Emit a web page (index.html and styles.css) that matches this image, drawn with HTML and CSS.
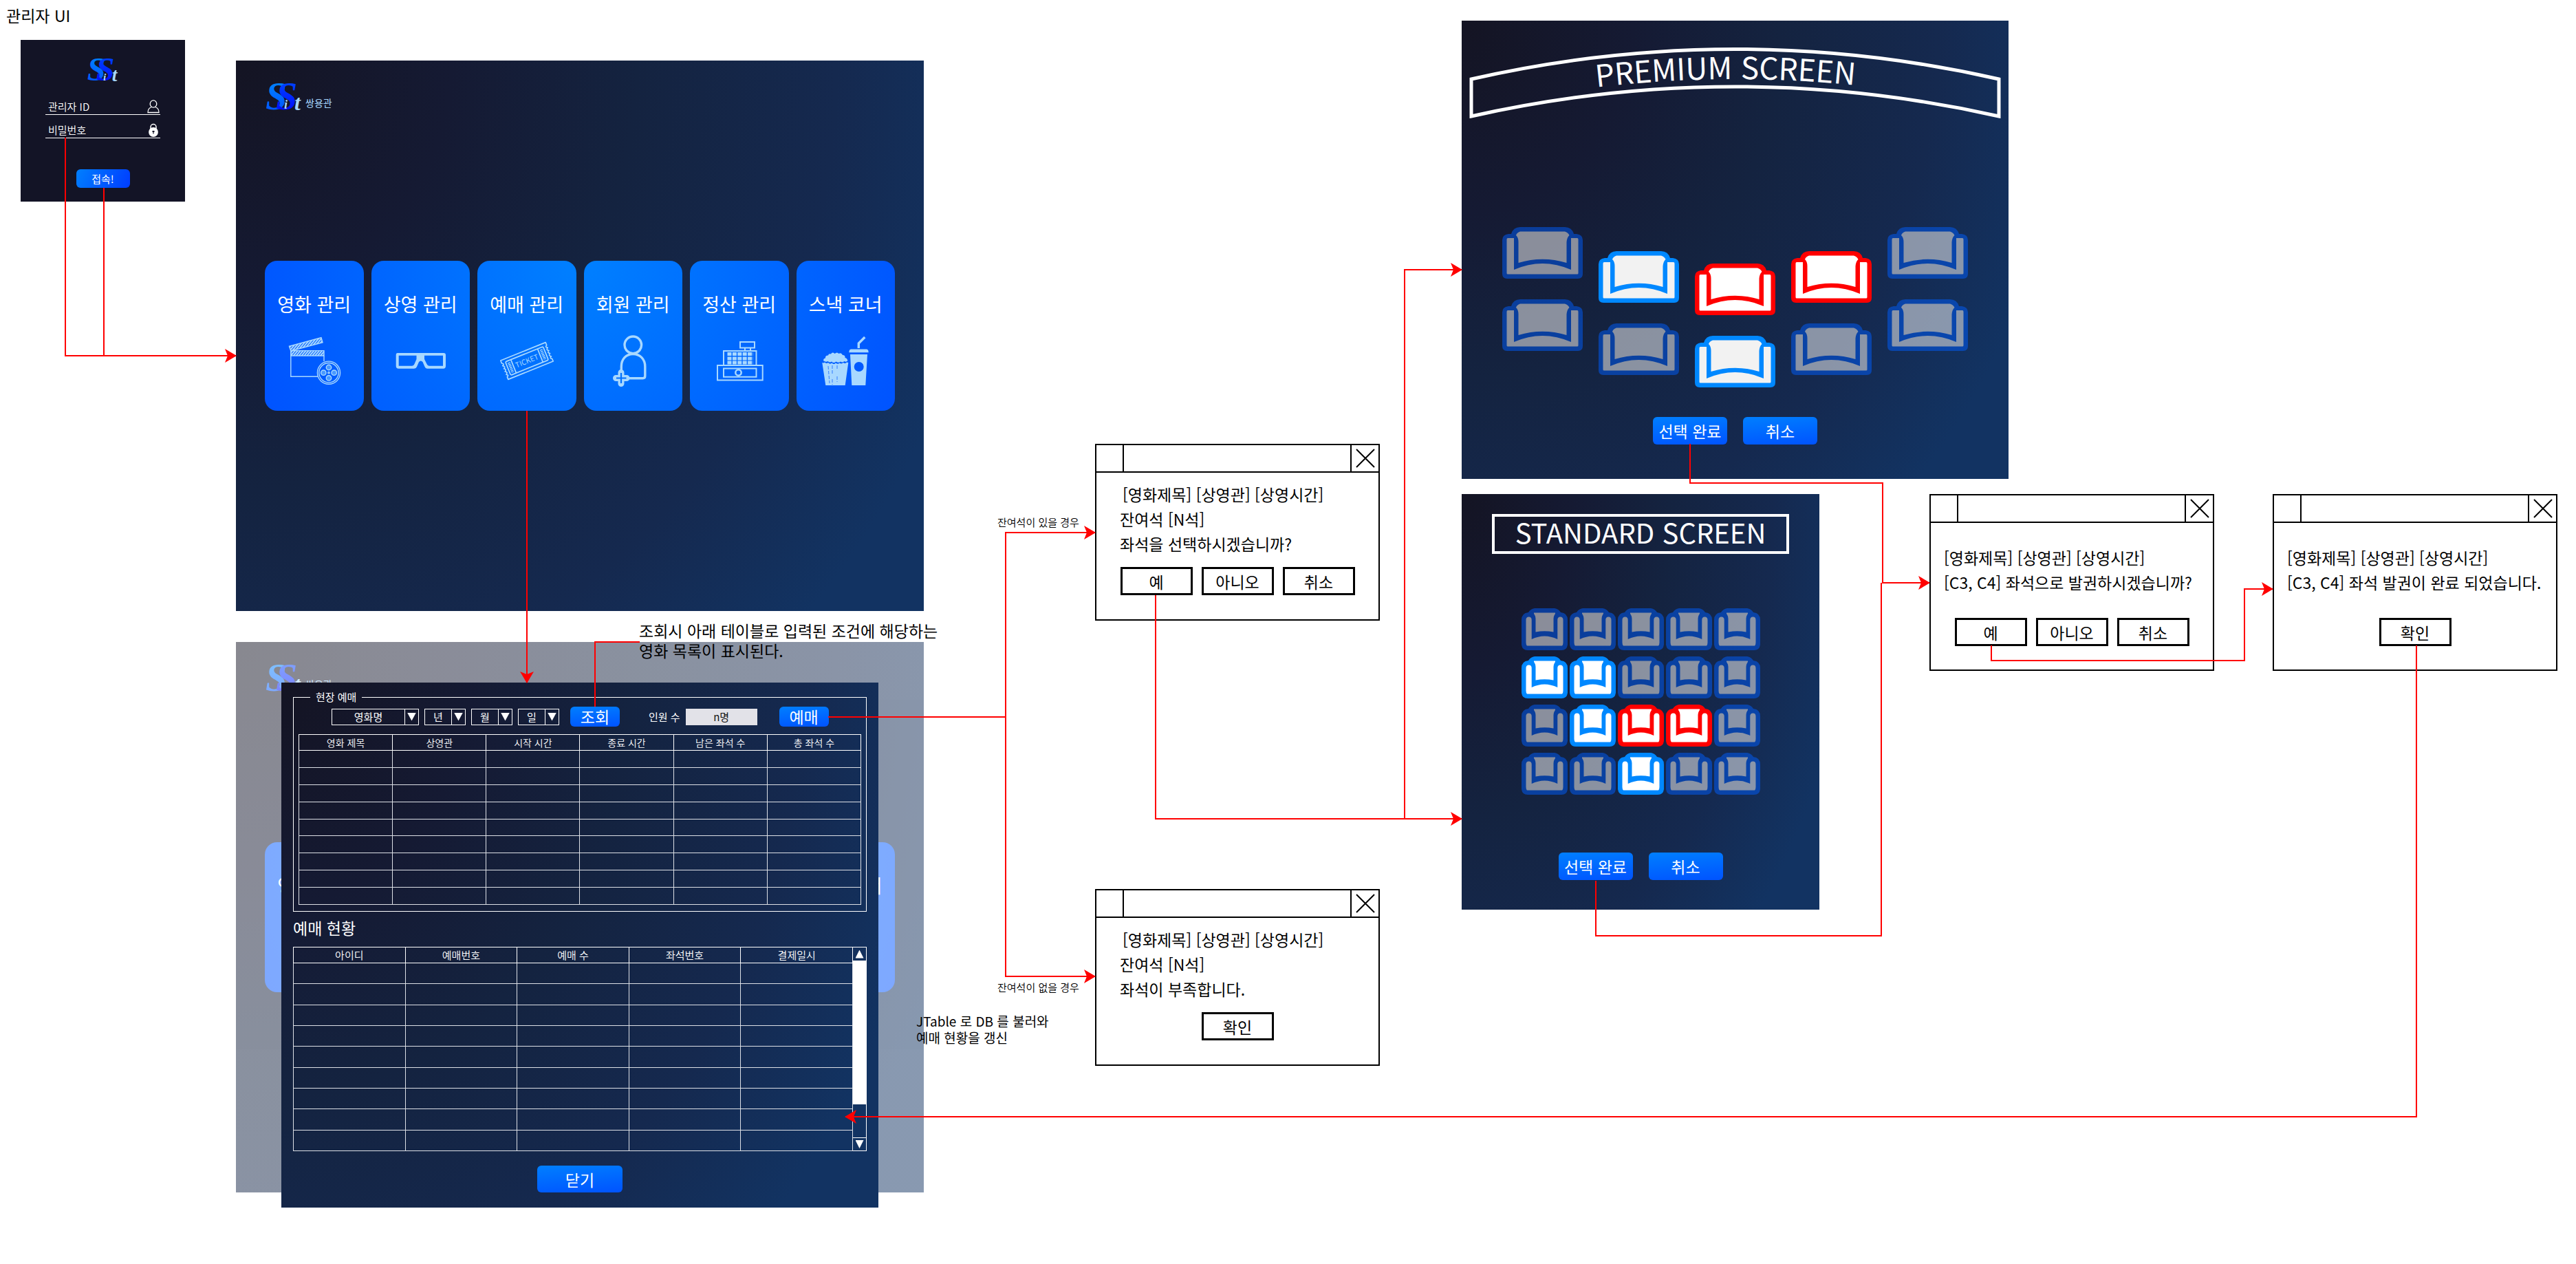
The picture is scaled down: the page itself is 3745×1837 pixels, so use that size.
FILE: index.html
```html
<!DOCTYPE html>
<html lang="ko">
<head>
<meta charset="utf-8">
<title>관리자 UI</title>
<link rel="stylesheet" href="styles.css">
</head>
<body>
<svg class="defs" aria-hidden="true">
  <defs>
    <linearGradient id="s-light" x1="0" y1="0" x2="0" y2="1">
      <stop offset="0" stop-color="#008cff"/><stop offset="1" stop-color="#004cff"/>
    </linearGradient>
    <linearGradient id="s-deep" x1="0" y1="0" x2="0" y2="1">
      <stop offset="0" stop-color="#0050ff"/><stop offset="1" stop-color="#0000ff"/>
    </linearGradient>
    <pattern id="hatch" width="3" height="3" patternUnits="userSpaceOnUse" patternTransform="rotate(40)">
      <rect width="2" height="3" fill="#a8d8ff"/>
    </pattern>
    <marker id="head" viewBox="0 0 17 20" refX="16" refY="10" markerWidth="17" markerHeight="20" markerUnits="userSpaceOnUse" orient="auto">
      <path d="M0 0 17 10 0 20 4 10Z" fill="#f00"/>
    </marker>
  </defs>

  <symbol id="icon-movie" viewBox="0 0 80 80">
    <g fill="none" stroke="#a8d8ff" stroke-width="1.4">
      <path d="M3.5 18.3 50 5.7 52 12.7 5.8 25Z" fill="url(#hatch)"/>
      <path d="M5.8 24.6H54V32H5.8Z" fill="url(#hatch)"/>
      <path d="M45 62.2H5.8V25M54 32V40"/>
      <circle cx="61" cy="56.7" r="16.6"/>
      <circle cx="61" cy="56.7" r="14.2"/>
      <g fill="#4a9aff"><circle cx="61" cy="49" r="3.7"/><circle cx="61" cy="64.4" r="3.7"/><circle cx="53.3" cy="56.7" r="3.7"/><circle cx="68.7" cy="56.7" r="3.7"/></g>
      <circle cx="61" cy="56.7" r="1.2"/>
    </g>
  </symbol>
  <symbol id="icon-glasses" viewBox="0 0 80 80">
    <path fill="#a8d8ff" fill-rule="evenodd" d="M7 28H74Q77 28 77 31V47Q77 50.7 73.500 50.700H50Q47.500 50.700 46.500 48L43.500 41Q40.700 38 38 41L35 48Q34 50.700 31 50.700H8.500Q4.700 50.700 4.700 47V31Q4.700 28 7 28ZM8.700 31.700V46.700H28Q30.500 46.700 31.500 44L34.500 37V31.700ZM46 31.700V37L49.500 44Q50.500 46.700 53 46.700H73V31.700Z"/>
  </symbol>
  <symbol id="icon-member" viewBox="0 0 80 80">
    <g fill="none" stroke="#a8d8ff" stroke-width="3.400">
      <circle cx="40.300" cy="16.300" r="12.300"/>
      <path d="M23.300 54V47.500C23.300 37 30 29.500 40.300 29.500S57.800 37 57.800 47.500V61.500Q57.800 64.700 54.600 64.700H34"/>
      <path d="M23 56.500V72.500M15.500 64.500H31" stroke-width="9" stroke-linecap="round"/>
      <path d="M23 57V72M16 64.500H30.500" stroke="#0070ff" stroke-width="2.200"/>
    </g>
  </symbol>
  <symbol id="icon-register" viewBox="0 0 80 80">
    <g fill="none" stroke="#a8d8ff" stroke-width="2">
      <path d="M8 46H73.700V67.500H8ZM17 50.500H64.500V62.800H17ZM17 46V25H64.500V46M41 12H62V20.500H41ZM48 21V25M56 21V25"/>
      <circle cx="38.500" cy="56.500" r="4.200" stroke-width="2.500"/>
      <path d="M22.500 29.500H60M22.500 36H60M22.500 42H60" stroke-width="5" stroke-dasharray="6 1.400"/>
    </g>
  </symbol>
  <symbol id="icon-snack" viewBox="0 0 80 80">
    <g fill="#a8d8ff">
      <path d="M6.300 42Q8.500 43 10 41.500 12 44 15 42 17.500 45 20.500 42.500 23 45.500 26 42.500 29 45 31.500 42.500 34.500 44.500 37 42 40 44 42 41.500L44.300 42 39.700 75H11.300Z"/>
      <path d="M8.300 39.500Q7.500 36 11 35.500 10.500 31.500 15 31.500 15.500 28.500 19 29.500 21 26 24.500 29 28 26 30.500 29 34 27 36 31 40 31 39.500 35 43 35.500 43.300 39.500 41 41.500 38.500 40 36 42.500 33 40.500 30 43 26.500 40.500 23 43.500 20 40.500 17 42.500 14.500 40 11.500 41.500 8.300 39.500Z"/>
      <path fill-rule="evenodd" d="M48 22.500H71Q73.700 23 73.700 27.300H45.300Q45.300 23 48 22.500ZM47 30H72L69.300 75H49.300ZM59.700 41A7 7 0 1 0 59.700 55 7 7 0 1 0 59.700 41Z"/>
      <path d="M59.300 21V14L68.300 5" fill="none" stroke="#a8d8ff" stroke-width="3.400"/>
      <path d="M15 47 17 72M21 46V60M21 66V74M28 46V52M28 62V70" fill="none" stroke="#0058ff" stroke-width=".7" stroke-dasharray="5 2"/>
    </g>
  </symbol>

  <symbol id="seat-wide" viewBox="0 0 117 75">
    <path class="seat-frame" d="M26 0H91Q101 0 104 10H108Q117 11 117 19V68Q117 75 110 75H7Q0 75 0 68V19Q0 11 9 10H13Q16 0 26 0Z"/>
    <path class="seat-pad" d="M26 6.500H91Q96 8 97.500 12 94 15 93.500 22V52Q58.500 41.400 23.500 52V22Q23.500 15 20 12 21 8 26 6.500Z"/>
    <path class="seat-pad" d="M8 16H17V62Q58.500 44 100 62V16H109Q110.500 16 110.500 18V67Q110.500 68.500 109 68.500H8Q6.500 68.500 6.500 67V18Q6.500 16 8 16Z"/>
  </symbol>
  <symbol id="seat-small" viewBox="0 0 67 61">
    <path class="seat-frame" d="M19 0H48Q54 1 57 6 67 7 67 17V53Q66 61 58 61H9Q1 61 0 53V17Q0 7 10 6 13 1 19 0Z"/>
    <path class="seat-pad" d="M18 6.500H49Q49.500 8 48 9.500 46.500 12 46.500 15V34.500Q33.500 32 20.500 34.500V15Q20.500 12 19 9.500 17.500 8 18 6.500Z"/>
    <path class="seat-pad" d="M6.500 17Q6.500 12.500 10.600 12.500T14.700 17V45Q33.500 36 52.300 45V17Q52.300 12.500 56.400 12.500T60.500 17V50Q60.500 53 59 54.600H8Q6.500 53 6.500 50Z"/>
  </symbol>
  <symbol id="icon-user" viewBox="0 0 18 20">
    <g fill="none" stroke="#fff" stroke-width="1.300"><ellipse cx="9" cy="6" rx="4.800" ry="5.200"/><path d="M6.500 10.500C3 11.500 1 14.500 1 18.500H17C17 14.500 15 11.500 11.500 10.500"/></g>
  </symbol>
  <symbol id="icon-lock" viewBox="0 0 18 20">
    <path d="M5 9V5.500A4 4 0 0 1 13 5.500V9" fill="none" stroke="#fff" stroke-width="1.500"/>
    <circle cx="9" cy="13" r="6.900" fill="#fff"/><path d="M7.500 11H10.500V13H9.600V15.500H8.400V13H7.500Z" fill="#131426"/>
  </symbol>
</svg>

<main class="canvas">
  <h1 class="note page-title">관리자 UI</h1>

  <form class="login">
    <svg class="login-logo" viewBox="0 0 56 42"><text class="logo-s" x="1" y="39" fill="url(#s-light)">S</text><text class="logo-s" x="16" y="39" fill="url(#s-deep)">S</text><text class="logo-i" x="28" y="38">i</text><text class="logo-t" x="43" y="40">t</text></svg>
    <div class="field"><input type="text" placeholder="관리자 ID" aria-label="관리자 ID"><svg class="field-icon"><use href="#icon-user"/></svg></div>
    <div class="field"><input type="password" placeholder="비밀번호" aria-label="비밀번호"><svg class="field-icon"><use href="#icon-lock"/></svg></div>
    <button class="btn btn-login" type="button">접속!</button>
  </form>

  <section class="panel home home-main">
    <header class="brand"><svg class="brand-logo" viewBox="0 0 56 42"><text class="logo-s" x="1" y="39" fill="url(#s-light)">S</text><text class="logo-s" x="16" y="39" fill="url(#s-deep)">S</text><text class="logo-i" x="28" y="38">i</text><text class="logo-t" x="43" y="40">t</text></svg><span>쌍용관</span></header>
    <nav class="cards">
      <button class="card" type="button">영화 관리<svg><use href="#icon-movie"/></svg></button>
      <button class="card" type="button">상영 관리<svg><use href="#icon-glasses"/></svg></button>
      <button class="card" type="button">예매 관리<svg viewBox="-2 -2 84 84">
        <g transform="translate(40 39.500) rotate(-22)" fill="none" stroke="#a8d8ff" stroke-width="1.800" stroke-linejoin="round">
          <path d="M-37-15.500H37V-11Q33-9 37-7 33-4.500 37-2 33 0 37 2.500 33 5 37 7.500 33 9.500 37 11.500V15.500H-37V11.500Q-33 9.500-37 7.500-33 5-37 2.500-33 0-37-2-33-4.500-37-7-33-9-37-11Z"/>
          <rect x="-31" y="-11" width="62" height="22" rx="2"/>
          <path d="M-22-11V11M22-11V11"/>
          <path d="M-26.500-8V8M26.500-8V8" stroke-width="4" stroke-dasharray="1.500 1"/>
          <text class="ticket-text" x="0" y="4">TICKET</text>
        </g></svg></button>
      <button class="card" type="button">회원 관리<svg><use href="#icon-member"/></svg></button>
      <button class="card" type="button">정산 관리<svg><use href="#icon-register"/></svg></button>
      <button class="card" type="button">스낵 코너<svg><use href="#icon-snack"/></svg></button>
    </nav>
  </section>

  <section class="panel home home-dimmed" aria-hidden="true">
    <header class="brand"><svg class="brand-logo" viewBox="0 0 56 42"><text class="logo-s" x="1" y="39" fill="url(#s-light)">S</text><text class="logo-s" x="16" y="39" fill="url(#s-deep)">S</text><text class="logo-t" x="43" y="40">t</text></svg><span>쌍용관</span></header>
    <div class="cards">
      <div class="card">영화 관리</div>
      <div class="card"></div>
      <div class="card"></div>
      <div class="card"></div>
      <div class="card"></div>
      <div class="card">스낵 코너</div>
    </div>
  </section>

  <section class="panel booking">
    <fieldset class="onsite">
      <legend>현장 예매</legend>
      <div class="filters">
        <span class="combo combo-wide"><select aria-label="영화명"><option>영화명</option></select></span>
        <span class="combo"><select aria-label="년"><option>년</option></select></span>
        <span class="combo"><select aria-label="월"><option>월</option></select></span>
        <span class="combo"><select aria-label="일"><option>일</option></select></span>
        <button class="btn btn-search" type="button">조회</button>
        <label class="people">인원 수 <input type="text" value="n명"></label>
        <button class="btn btn-search" type="button">예매</button>
      </div>
      <table class="grid grid-movies">
        <thead><tr><th>영화 제목</th><th>상영관</th><th>시작 시간</th><th>종료 시간</th><th>남은 좌석 수</th><th>총 좌석 수</th></tr></thead>
        <tbody>
          <tr><td></td><td></td><td></td><td></td><td></td><td></td></tr>
          <tr><td></td><td></td><td></td><td></td><td></td><td></td></tr>
          <tr><td></td><td></td><td></td><td></td><td></td><td></td></tr>
          <tr><td></td><td></td><td></td><td></td><td></td><td></td></tr>
          <tr><td></td><td></td><td></td><td></td><td></td><td></td></tr>
          <tr><td></td><td></td><td></td><td></td><td></td><td></td></tr>
          <tr><td></td><td></td><td></td><td></td><td></td><td></td></tr>
          <tr><td></td><td></td><td></td><td></td><td></td><td></td></tr>
          <tr><td></td><td></td><td></td><td></td><td></td><td></td></tr>
        </tbody>
      </table>
    </fieldset>
    <h2>예매 현황</h2>
    <div class="status">
      <table class="grid grid-status">
        <thead><tr><th>아이디</th><th>예매번호</th><th>예매 수</th><th>좌석번호</th><th>결제일시</th></tr></thead>
        <tbody>
          <tr><td></td><td></td><td></td><td></td><td></td></tr>
          <tr><td></td><td></td><td></td><td></td><td></td></tr>
          <tr><td></td><td></td><td></td><td></td><td></td></tr>
          <tr><td></td><td></td><td></td><td></td><td></td></tr>
          <tr><td></td><td></td><td></td><td></td><td></td></tr>
          <tr><td></td><td></td><td></td><td></td><td></td></tr>
          <tr><td></td><td></td><td></td><td></td><td></td></tr>
          <tr><td></td><td></td><td></td><td></td><td></td></tr>
          <tr><td></td><td></td><td></td><td></td><td></td></tr>
        </tbody>
      </table>
      <div class="scrollbar">
        <button class="scroll-up" type="button" aria-label="위로"></button>
        <span class="scroll-thumb"></span>
        <span class="scroll-track"></span>
        <button class="scroll-down" type="button" aria-label="아래로"></button>
      </div>
    </div>
    <button class="btn btn-close" type="button">닫기</button>
  </section>

  <section class="dialog dialog-seats dialog-available">
    <header><span class="dialog-icon"></span><button class="dialog-x" type="button" aria-label="닫기"><svg viewBox="0 0 28 28"><path d="M1 1 27 27M27 1 1 27"/></svg></button></header>
    <div class="dialog-text"><p>[영화제목] [상영관] [상영시간]</p><p>잔여석 [N석]</p><p>좌석을 선택하시겠습니까?</p></div>
    <div class="dialog-actions"><button type="button">예</button><button type="button">아니오</button><button type="button">취소</button></div>
  </section>

  <section class="dialog dialog-seats dialog-full">
    <header><span class="dialog-icon"></span><button class="dialog-x" type="button" aria-label="닫기"><svg viewBox="0 0 28 28"><path d="M1 1 27 27M27 1 1 27"/></svg></button></header>
    <div class="dialog-text"><p>[영화제목] [상영관] [상영시간]</p><p>잔여석 [N석]</p><p>좌석이 부족합니다.</p></div>
    <div class="dialog-actions"><button type="button">확인</button></div>
  </section>

  <section class="dialog dialog-short dialog-confirm">
    <header><span class="dialog-icon"></span><button class="dialog-x" type="button" aria-label="닫기"><svg viewBox="0 0 28 28"><path d="M1 1 27 27M27 1 1 27"/></svg></button></header>
    <div class="dialog-text"><p>[영화제목] [상영관] [상영시간]</p><p>[C3, C4] 좌석으로 발권하시겠습니까?</p></div>
    <div class="dialog-actions"><button type="button">예</button><button type="button">아니오</button><button type="button">취소</button></div>
  </section>

  <section class="dialog dialog-short dialog-done">
    <header><span class="dialog-icon"></span><button class="dialog-x" type="button" aria-label="닫기"><svg viewBox="0 0 28 28"><path d="M1 1 27 27M27 1 1 27"/></svg></button></header>
    <div class="dialog-text"><p>[영화제목] [상영관] [상영시간]</p><p>[C3, C4] 좌석 발권이 완료 되었습니다.</p></div>
    <div class="dialog-actions"><button type="button">확인</button></div>
  </section>

  <section class="panel hall premium">
    <svg class="arc" viewBox="0 0 795 180">
      <path d="M14 85Q397-2 781 85V139Q397 53 14 139Z" fill="none" stroke="#fff" stroke-width="5"/>
      <path id="arc-base" d="M14 128Q397 42 781 128" fill="none"/>
      <text class="screen-name"><textPath href="#arc-base" startOffset="48.200%">PREMIUM SCREEN</textPath></text>
    </svg>
    <div class="curve">
      <div class="curve-col"><button class="seat off" type="button" aria-label="A1"><svg><use href="#seat-wide"/></svg></button><button class="seat off" type="button" aria-label="B1"><svg><use href="#seat-wide"/></svg></button></div>
      <div class="curve-col mid"><button class="seat free" type="button" aria-label="A2"><svg><use href="#seat-wide"/></svg></button><button class="seat off" type="button" aria-label="B2"><svg><use href="#seat-wide"/></svg></button></div>
      <div class="curve-col deep"><button class="seat picked" type="button" aria-label="A3"><svg><use href="#seat-wide"/></svg></button><button class="seat free" type="button" aria-label="B3"><svg><use href="#seat-wide"/></svg></button></div>
      <div class="curve-col mid"><button class="seat picked" type="button" aria-label="A4"><svg><use href="#seat-wide"/></svg></button><button class="seat off" type="button" aria-label="B4"><svg><use href="#seat-wide"/></svg></button></div>
      <div class="curve-col"><button class="seat off" type="button" aria-label="A5"><svg><use href="#seat-wide"/></svg></button><button class="seat off" type="button" aria-label="B5"><svg><use href="#seat-wide"/></svg></button></div>
    </div>
    <div class="hall-actions"><button class="btn" type="button">선택 완료</button><button class="btn" type="button">취소</button></div>
  </section>

  <section class="panel hall standard">
    <h2 class="screen-box">STANDARD SCREEN</h2>
    <div class="rows">
      <button class="seat off" type="button" aria-label="A1"><svg><use href="#seat-small"/></svg></button>
      <button class="seat off" type="button" aria-label="A2"><svg><use href="#seat-small"/></svg></button>
      <button class="seat off" type="button" aria-label="A3"><svg><use href="#seat-small"/></svg></button>
      <button class="seat off" type="button" aria-label="A4"><svg><use href="#seat-small"/></svg></button>
      <button class="seat off" type="button" aria-label="A5"><svg><use href="#seat-small"/></svg></button>
      <button class="seat free" type="button" aria-label="B1"><svg><use href="#seat-small"/></svg></button>
      <button class="seat free" type="button" aria-label="B2"><svg><use href="#seat-small"/></svg></button>
      <button class="seat off" type="button" aria-label="B3"><svg><use href="#seat-small"/></svg></button>
      <button class="seat off" type="button" aria-label="B4"><svg><use href="#seat-small"/></svg></button>
      <button class="seat off" type="button" aria-label="B5"><svg><use href="#seat-small"/></svg></button>
      <button class="seat off" type="button" aria-label="C1"><svg><use href="#seat-small"/></svg></button>
      <button class="seat free" type="button" aria-label="C2"><svg><use href="#seat-small"/></svg></button>
      <button class="seat picked" type="button" aria-label="C3"><svg><use href="#seat-small"/></svg></button>
      <button class="seat picked" type="button" aria-label="C4"><svg><use href="#seat-small"/></svg></button>
      <button class="seat off" type="button" aria-label="C5"><svg><use href="#seat-small"/></svg></button>
      <button class="seat off" type="button" aria-label="D1"><svg><use href="#seat-small"/></svg></button>
      <button class="seat off" type="button" aria-label="D2"><svg><use href="#seat-small"/></svg></button>
      <button class="seat free" type="button" aria-label="D3"><svg><use href="#seat-small"/></svg></button>
      <button class="seat off" type="button" aria-label="D4"><svg><use href="#seat-small"/></svg></button>
      <button class="seat off" type="button" aria-label="D5"><svg><use href="#seat-small"/></svg></button>
    </div>
    <div class="hall-actions"><button class="btn" type="button">선택 완료</button><button class="btn" type="button">취소</button></div>
  </section>

  <p class="note note-search">조회시 아래 테이블로 입력된 조건에 해당하는<br>영화 목록이 표시된다.</p>
  <p class="note note-available">잔여석이 있을 경우</p>
  <p class="note note-full">잔여석이 없을 경우</p>
  <p class="note note-table">JTable 로 DB 를 불러와<br>예매 현황을 갱신</p>

  <svg class="flow" aria-hidden="true">
    <path d="M151 273V517"/>
    <path d="M930 933H865V1027"/>
    <path d="M1204 1042H1462"/>
    <g marker-end="url(#head)">
      <path d="M95 200V517H343"/>
      <path d="M766 597V992"/>
      <path d="M1462 1042V774H1592"/>
      <path d="M1462 1042V1419H1592"/>
      <path d="M1680 865V1190H2125"/>
      <path d="M2042 1190V392H2125"/>
      <path d="M2457 645V702H2737V847H2805"/>
      <path d="M2895 938V960H3263V856H3304"/>
      <path d="M3513 938V1623H1229"/>
    </g>
    <path d="M2320 1280V1360H2735V847"/>
  </svg>
</main>
</body>
</html>
```
FILE: styles.css
```css
* { box-sizing: border-box; }

body {
  margin: 0;
  background: #fff;
  color: #000;
  font: 400 23px/29px "Noto Sans CJK KR", "Noto Sans", sans-serif;
}

h1, h2, p { margin: 0; font-weight: 400; }

button, input, select { font: inherit; color: inherit; }

button { padding: 0; border: 0; background: none; }

.defs { position: absolute; width: 0; height: 0; }

.canvas { position: relative; min-height: 100vh; overflow: hidden; }

/* Free-floating notes */
.note { position: absolute; white-space: nowrap; }
.page-title { left: 9px; top: 8px; font-size: 23px; }
.note-search { left: 929px; top: 902px; }
.note-available, .note-full { left: 1450px; font-size: 15px; line-height: 20px; font-weight: 350; }
.note-available { top: 749px; }
.note-full { top: 1425px; }
.note-table { left: 1332px; top: 1472px; font-size: 19px; line-height: 24px; }

.flow {
  position: absolute;
  inset: 0;
  width: 100%;
  height: 100%;
  fill: none;
  stroke: #f00;
  stroke-width: 2;
  pointer-events: none;
}

/* Shared surfaces */
.panel {
  position: absolute;
  color: #fff;
  background: radial-gradient(ellipse 112% 150% at 0 0, #141423, #151a33 28%, #142340 52%, #15294f 78%, #123362);
}

.btn {
  border-radius: 6px;
  color: #fff;
  background: linear-gradient(175deg, #007fff, #0053ff);
}

/* Logo */
.logo-s { font: italic 700 56px "Liberation Serif", serif; }
.logo-i { font: italic 700 18px "Liberation Serif", serif; fill: #a8d8ff; }
.logo-t { font: italic 700 32px "Liberation Serif", serif; fill: #a8d8ff; }

/* Login */
.login {
  position: absolute;
  left: 30px;
  top: 58px;
  width: 239px;
  display: flex;
  flex-direction: column;
  align-items: center;
  padding: 26px 36px 20px;
  background: #131426;
  color: #fff;
  font-size: 15px;
  line-height: 22px;
}
.login-logo { width: 48px; height: 36px; margin-bottom: 23px; }
.field {
  display: flex;
  align-items: center;
  width: 100%;
  height: 24px;
  margin-bottom: 10px;
  padding: 0 1px 0 4px;
  border-bottom: 1px solid #fff;
}
.field input { flex: 1; min-width: 0; padding: 0; border: 0; background: none; font-weight: 350; }
.field input::placeholder { color: #fff; opacity: 1; }
.field-icon { width: 18px; height: 20px; }
.btn-login { width: 78px; height: 27px; margin-top: 35px; background: linear-gradient(115deg, #007fff, #003cff); }

/* Home screen */
.home { left: 343px; width: 1000px; height: 800px; padding: 32px 42px; }
.home-main { top: 88px; }
.home-dimmed { top: 933px; opacity: .5; }
.brand { display: flex; align-items: flex-end; gap: 3px; height: 42px; color: #a8d8ff; font-size: 14px; line-height: 18px; }
.brand-logo { width: 56px; height: 42px; }
.brand span { padding-bottom: 4px; }
.cards { display: flex; gap: 11px; margin-top: 217px; }
.card {
  flex: 1;
  display: flex;
  flex-direction: column;
  align-items: center;
  height: 218px;
  padding-top: 45px;
  border-radius: 18px;
  color: #fff;
  font-size: 27px;
  line-height: 36px;
  background: radial-gradient(circle 520px at 458px 0, #0080ff, #0052ff);
}
.card:nth-child(2) { background-image: radial-gradient(circle 520px at 304px 0, #0080ff, #0052ff); }
.card:nth-child(3) { background-image: radial-gradient(circle 520px at 149px 0, #0080ff, #0052ff); }
.card:nth-child(4) { background-image: radial-gradient(circle 520px at -5px 0, #0080ff, #0052ff); }
.card:nth-child(5) { background-image: radial-gradient(circle 520px at -159px 0, #0080ff, #0052ff); }
.card:nth-child(6) { background-image: radial-gradient(circle 520px at -314px 0, #0080ff, #0052ff); }
.card svg { width: 80px; height: 80px; margin-top: 25px; }
.ticket-text { font: 400 11px "Noto Sans CJK KR", sans-serif; text-anchor: middle; fill: #a8d8ff; stroke: none; }

/* Booking window */
.booking {
  left: 409px;
  top: 992px;
  width: 868px;
  display: flex;
  flex-direction: column;
  padding: 10px 17px 22px;
  font-size: 15px;
  line-height: 22px;
}
.onsite { min-width: 0; margin: 0; padding: 0 7px 9px; border: 1px solid #fff; }
.onsite legend { margin-left: 17px; padding: 0 8px; }
.filters { display: flex; align-items: center; gap: 8px; margin-top: 3px; padding-left: 48px; }
.combo { position: relative; display: flex; width: 60px; height: 24px; border: 1px solid #fff; }
.combo-wide { width: 127px; }
.combo select {
  flex: 1;
  min-width: 0;
  padding: 0 20px 0 0;
  border: 0;
  background: none;
  appearance: none;
  text-align: center;
  text-align-last: center;
  line-height: 20px;
}
.combo::before { content: ""; position: absolute; right: 19px; top: 0; bottom: 0; border-left: 1px solid #fff; }
.combo::after {
  content: "";
  position: absolute;
  right: 3px;
  top: 5px;
  width: 13px;
  height: 12px;
  background: #fff;
  clip-path: polygon(0 0, 100% 0, 50% 100%);
  pointer-events: none;
}
.btn-search { width: 72px; height: 29px; margin-left: 8px; font-size: 23px; line-height: 27px; }
.people { display: flex; align-items: center; gap: 8px; margin: 0 16px 0 34px; }
.people input { width: 104px; height: 24px; padding: 0; border: 0; background: #e2e2e8; color: #111; text-align: center; }

.grid { width: 100%; border-collapse: collapse; table-layout: fixed; }
.grid th, .grid td { padding: 0; border: 1px solid #fff; }
.grid th { font-weight: 350; }
.grid td { border-color: #dde0e6; }
.grid-movies { height: 248px; margin-top: 11px; font-size: 14px; }
.booking h2 { margin: 8px 0 13px; font-size: 23px; line-height: 30px; }
.status { display: flex; height: 297px; }
.grid-status { flex: 1; height: 297px; }
.scrollbar { display: flex; flex-direction: column; width: 20px; border: 1px solid #fff; border-left: 0; }
.scroll-up, .scroll-down { display: grid; place-items: center; height: 19px; }
.scroll-up::before, .scroll-down::before { content: ""; width: 12px; height: 12px; background: #fff; clip-path: polygon(50% 0, 100% 100%, 0 100%); }
.scroll-down { border-top: 1px solid #fff; }
.scroll-down::before { clip-path: polygon(0 0, 100% 0, 50% 100%); }
.scroll-thumb { flex: 1; background: #fff; }
.scroll-track { height: 48px; }
.btn-close { align-self: center; width: 124px; height: 39px; margin-top: 21px; font-size: 23px; line-height: 36px; }

/* Message dialogs */
.dialog { position: absolute; width: 414px; height: 257px; border: 2px solid #000; }
.dialog-available { left: 1592px; top: 645px; }
.dialog-full { left: 1592px; top: 1292px; }
.dialog-confirm { left: 2805px; top: 718px; }
.dialog-done { left: 3304px; top: 718px; }
.dialog header { display: flex; justify-content: space-between; height: 40px; border-bottom: 2px solid #000; }
.dialog-icon { width: 40px; border-right: 2px solid #000; }
.dialog-x { display: grid; place-items: center; width: 41px; border-left: 2px solid #000; }
.dialog-x svg { width: 28px; height: 28px; stroke: #000; stroke-width: 2; }
.dialog-text { padding: 13px 0 16px 34px; line-height: 36px; white-space: nowrap; }
.dialog-seats p:first-child { padding-left: 4px; }
.dialog-short .dialog-text { padding: 32px 0 34px 19px; }
.dialog-actions { display: flex; justify-content: center; gap: 13px; }
.dialog-actions button { width: 105px; height: 41px; border: 3px solid #000; line-height: 32px; }

/* Seat maps */
.hall { display: flex; flex-direction: column; align-items: center; }
.premium { left: 2125px; top: 30px; width: 795px; height: 666px; }
.standard { left: 2125px; top: 718px; width: 520px; height: 604px; padding-top: 29px; }
.arc { width: 100%; height: 180px; }
.screen-name { font-size: 44px; text-anchor: middle; fill: #fff; }
.screen-box { width: 432px; height: 58px; border: 4px solid #fff; font-size: 40px; line-height: 45px; text-align: center; white-space: nowrap; }
.curve { display: flex; gap: 23px; height: 396px; padding-top: 120px; }
.curve-col { display: flex; flex-direction: column; gap: 30px; }
.curve-col.mid { padding-top: 35px; }
.curve-col.deep { padding-top: 53px; }
.seat { display: block; color: #08f; --pad: #fff; }
.seat svg { display: block; width: 117px; height: 75px; }
.seat.off { color: #005eff; opacity: .5; }
.seat.picked { color: #f00; }
.premium .seat.free { --pad: #f2f2f2; }
.seat-frame { fill: currentColor; }
.seat-pad { fill: var(--pad); }
.rows { display: grid; grid-template-columns: repeat(5, 67px); gap: 9px 3px; margin: 79px 0 84px; }
.rows .seat svg { width: 67px; height: 61px; }
.hall-actions { display: flex; gap: 23px; }
.hall-actions .btn { width: 108px; height: 40px; line-height: 36px; }
```
